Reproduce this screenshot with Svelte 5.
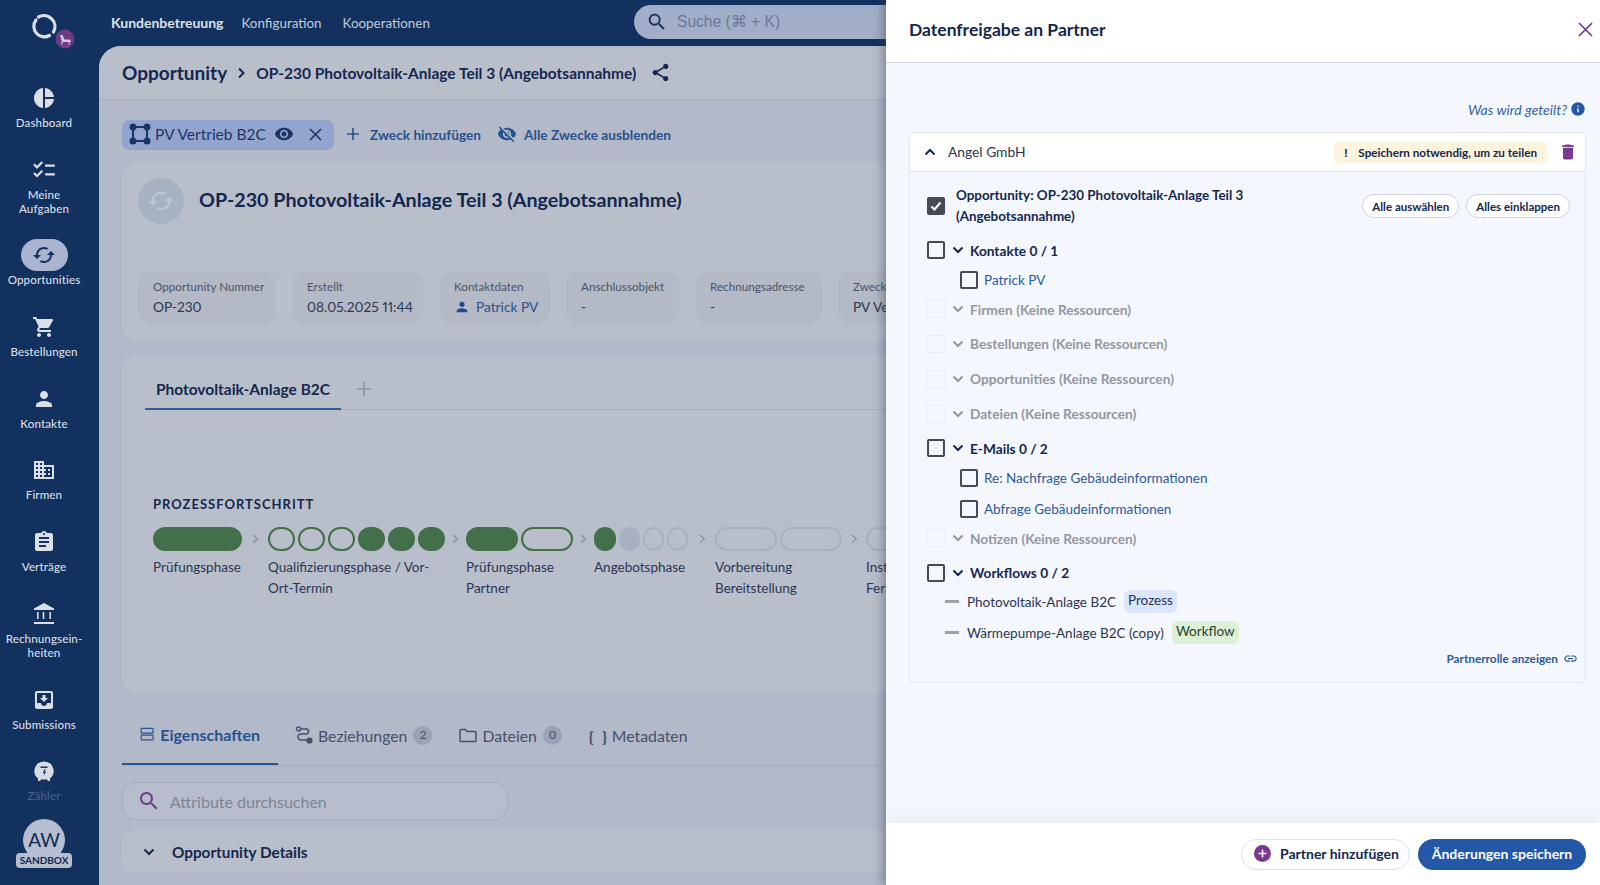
<script>
  const icons = {
    pie: 'M11 2v20c-5.07-.5-9-4.79-9-10s3.93-9.5 9-10zm2.03 0v8.99H22c-.47-4.74-4.24-8.52-8.97-8.99zm0 11.01V22c4.74-.47 8.5-4.25 8.97-8.99h-8.97z',
    tasks: 'M22 7h-9v2h9V7zm0 8h-9v2h9v-2zM5.54 11 2 7.46l1.41-1.41 2.12 2.12 4.24-4.24 1.41 1.41L5.54 11zm0 8L2 15.46l1.41-1.41 2.12 2.12 4.24-4.24 1.41 1.41L5.54 19z',
    cached: 'M19 8l-4 4h3c0 3.31-2.69 6-6 6-1.01 0-1.97-.25-2.8-.7l-1.46 1.46C8.97 19.54 10.43 20 12 20c4.42 0 8-3.58 8-8h3l-4-4zM6 12c0-3.31 2.69-6 6-6 1.01 0 1.97.25 2.8.7l1.46-1.46C15.03 4.46 13.57 4 12 4c-4.42 0-8 3.58-8 8H1l4 4 4-4H6z',
    cart: 'M7 18c-1.1 0-1.99.9-1.99 2S5.9 22 7 22s2-.9 2-2-.9-2-2-2zM1 2v2h2l3.6 7.59-1.35 2.45c-.16.28-.25.61-.25.96 0 1.1.9 2 2 2h12v-2H7.42c-.14 0-.25-.11-.25-.25l.03-.12.9-1.63h7.45c.75 0 1.41-.41 1.75-1.03l3.58-6.49c.08-.14.12-.31.12-.48 0-.55-.45-1-1-1H5.21l-.94-2H1zm16 16c-1.1 0-1.99.9-1.99 2s.89 2 1.99 2 2-.9 2-2-.9-2-2-2z',
    person: 'M12 12c2.21 0 4-1.79 4-4s-1.79-4-4-4-4 1.79-4 4 1.79 4 4 4zm0 2c-2.67 0-8 1.34-8 4v2h16v-2c0-2.66-5.33-4-8-4z',
    domain: 'M12 7V3H2v18h20V7H12zM6 19H4v-2h2v2zm0-4H4v-2h2v2zm0-4H4V9h2v2zm0-4H4V5h2v2zm4 12H8v-2h2v2zm0-4H8v-2h2v2zm0-4H8V9h2v2zm0-4H8V5h2v2zm10 12h-8v-2h2v-2h-2v-2h2v-2h-2V9h8v10zm-2-8h-2v2h2v-2zm0 4h-2v2h2v-2z',
    assignment: 'M19 3h-4.18C14.4 1.84 13.3 1 12 1c-1.3 0-2.4.84-2.82 2H5c-1.1 0-2 .9-2 2v14c0 1.1.9 2 2 2h14c1.1 0 2-.9 2-2V5c0-1.1-.9-2-2-2zm-7 0c.55 0 1 .45 1 1s-.45 1-1 1-1-.45-1-1 .45-1 1-1zm2 14H7v-2h7v2zm3-4H7v-2h10v2zm0-4H7V7h10v2z',
    bank: 'M5 10v7h1.6v-7H5zm5.7 0v7h1.6v-7h-1.6zM2 22h20v-2H2v2zm15.4-12v7H19v-7h-1.6zM12 1 2 6.5V8h20V6.5L12 1z',
    inbox: 'M19 3H5c-1.1 0-2 .9-2 2v14c0 1.1.9 2 2 2h14c1.1 0 2-.9 2-2V5c0-1.1-.9-2-2-2zm0 12h-4c0 1.66-1.35 3-3 3s-3-1.34-3-3H5V5h14v10zm-3-5h-2.5V7h-3v3H8l4 4 4-4z',
    search: 'M15.5 14h-.79l-.28-.27C15.41 12.59 16 11.11 16 9.5 16 5.91 13.09 3 9.5 3S3 5.91 3 9.5 5.91 16 9.5 16c1.61 0 3.09-.59 4.23-1.57l.27.28v.79l5 4.99L20.49 19l-4.99-5zm-6 0C7.01 14 5 11.99 5 9.5S7.01 5 9.5 5 14 7.01 14 9.5 11.99 14 9.5 14z',
    share: 'M18 16.08c-.76 0-1.44.3-1.96.77L8.91 12.7c.05-.23.09-.46.09-.7s-.04-.47-.09-.7l7.05-4.11c.54.5 1.25.81 2.04.81 1.66 0 3-1.34 3-3s-1.34-3-3-3-3 1.34-3 3c0 .24.04.47.09.7L8.04 9.81C7.5 9.31 6.79 9 6 9c-1.66 0-3 1.34-3 3s1.34 3 3 3c.79 0 1.5-.31 2.04-.81l7.12 4.16c-.05.21-.08.43-.08.65 0 1.61 1.31 2.92 2.92 2.92s2.92-1.31 2.92-2.92-1.31-2.92-2.92-2.92z',
    eye: 'M12 4.5C7 4.5 2.73 7.61 1 12c1.73 4.39 6 7.5 11 7.5s9.27-3.11 11-7.5c-1.73-4.39-6-7.5-11-7.5zM12 17c-2.76 0-5-2.24-5-5s2.24-5 5-5 5 2.24 5 5-2.24 5-5 5zm0-8c-1.66 0-3 1.34-3 3s1.34 3 3 3 3-1.34 3-3-1.34-3-3-3z',
    eyeOff: 'M12 7c2.76 0 5 2.24 5 5 0 .65-.13 1.26-.36 1.83l2.92 2.92c1.51-1.26 2.7-2.89 3.43-4.75-1.73-4.39-6-7.5-11-7.5-1.4 0-2.74.25-3.98.7l2.16 2.16C10.74 7.13 11.35 7 12 7zM2 4.27l2.28 2.28.46.46C3.08 8.3 1.78 10.02 1 12c1.73 4.39 6 7.5 11 7.5 1.55 0 3.03-.3 4.38-.84l.42.42L19.73 22 21 20.73 3.27 3 2 4.27zM7.53 9.8l1.55 1.55c-.05.21-.08.43-.08.65 0 1.66 1.34 3 3 3 .22 0 .44-.03.65-.08l1.55 1.55c-.67.33-1.41.53-2.2.53-2.76 0-5-2.24-5-5 0-.79.2-1.53.53-2.2zm4.31-.78l3.15 3.15.02-.16c0-1.66-1.34-3-3-3l-.17.01z',
    info: 'M12 2C6.48 2 2 6.48 2 12s4.48 10 10 10 10-4.48 10-10S17.52 2 12 2zm1 15h-2v-6h2v6zm0-8h-2V7h2v2z',
    trash: 'M6 19c0 1.1.9 2 2 2h8c1.1 0 2-.9 2-2V7H6v12zM19 4h-3.5l-1-1h-5l-1 1H5v2h14V4z',
    link: 'M3.9 12c0-1.71 1.39-3.1 3.1-3.1h4V7H7c-2.76 0-5 2.24-5 5s2.24 5 5 5h4v-1.9H7c-1.71 0-3.1-1.39-3.1-3.1zM8 13h8v-2H8v2zm9-6h-4v1.9h4c1.71 0 3.1 1.39 3.1 3.1s-1.39 3.1-3.1 3.1h-4V17h4c2.76 0 5-2.24 5-5s-2.24-5-5-5z'
  };

  const navItems = [
    { icon: 'pie', label: 'Dashboard' },
    { icon: 'tasks', label: 'Meine Aufgaben', wide: true },
    { icon: 'cached', label: 'Opportunities', active: true },
    { icon: 'cart', label: 'Bestellungen' },
    { icon: 'person', label: 'Kontakte' },
    { icon: 'domain', label: 'Firmen' },
    { icon: 'assignment', label: 'Verträge' },
    { icon: 'bank', label: 'Rechnungsein-heiten', wide: true },
    { icon: 'inbox', label: 'Submissions' }
  ];

  const infos = [
    { label: 'Opportunity Nummer', value: 'OP-230', width: 138 },
    { label: 'Erstellt', value: '08.05.2025 11:44', width: 131 },
    { label: 'Kontaktdaten', value: 'Patrick PV', width: 111, person: true },
    { label: 'Anschlussobjekt', value: '-', width: 113 },
    { label: 'Rechnungsadresse', value: '-', width: 127 },
    { label: 'Zweck', value: 'PV Vertrieb B2C', width: 140 }
  ];

  // f = filled, o = outlined green, g = grey fill, e = empty
  const phases = [
    { name: 'Prüfungsphase', width: 89, segs: [['f', 89]] },
    { name: 'Qualifizierungsphase / Vor-Ort-Termin', width: 176, gap: 26, segs: [['o', 27], ['o', 27], ['o', 27], ['f', 27], ['f', 27], ['f', 27]] },
    { name: 'Prüfungsphase Partner', width: 106, gap: 22, segs: [['f', 52], ['o', 52]] },
    { name: 'Angebotsphase', width: 94, gap: 22, segs: [['f', 22], ['g', 21], ['e', 21], ['e', 21]] },
    { name: 'Vorbereitung Bereitstellung', width: 127, gap: 27, segs: [['e', 62], ['e', 62]] },
    { name: 'Installation Fertigstellung', width: 127, gap: 24, segs: [['e', 62], ['e', 62]] }
  ];

  const tabs = [
    { label: 'Beziehungen', badge: 2, kind: 'rel' },
    { label: 'Dateien', badge: 0, kind: 'folder' },
    { label: 'Metadaten', kind: 'braces' }
  ];

  const groups = [
    { label: 'Kontakte 0 / 1', children: ['Patrick PV'] },
    { label: 'Firmen (Keine Ressourcen)', off: true },
    { label: 'Bestellungen (Keine Ressourcen)', off: true },
    { label: 'Opportunities (Keine Ressourcen)', off: true },
    { label: 'Dateien (Keine Ressourcen)', off: true },
    { label: 'E-Mails 0 / 2', children: ['Re: Nachfrage Gebäudeinformationen', 'Abfrage Gebäudeinformationen'] },
    { label: 'Notizen (Keine Ressourcen)', off: true },
    { label: 'Workflows 0 / 2' }
  ];
</script>

{#snippet icon(name, size)}
  <svg class="ico" width={size} height={size} viewBox="0 0 24 24" fill="currentColor"><path d={icons[name]} /></svg>
{/snippet}

{#snippet chevron(size, dir)}
  <svg class="ico" width={size} height={size} viewBox="0 0 16 16" fill="none" stroke="currentColor" stroke-width="2">
    {#if dir === 'up'}<path d="M3.5 10.5 8 6l4.5 4.5" />
    {:else if dir === 'right'}<path d="M6 3.5 10.5 8 6 12.5" />
    {:else}<path d="M3.5 5.5 8 10l4.5-4.5" />{/if}
  </svg>
{/snippet}

<div class="app">
  <aside class="sidebar">
    <svg class="logo" width="99" height="82" viewBox="0 0 99 82" fill="none">
      <path d="M38.500 17A11 11 0 0 1 53.500 32" stroke="#d9dee7" stroke-width="3.200" stroke-linecap="round" />
      <path d="M36 20A10.500 10.500 0 0 0 49.500 35.500" stroke="#d9dee7" stroke-width="3.200" stroke-linecap="round" />
      <circle cx="65" cy="39" r="9.500" fill="#6b3d83" />
      <path d="M60 35h2.500l2 4.500h5.500l1 2.500h-9z" fill="#d7c4de" />
      <path d="M62 42v2.500M69 42v2.500" stroke="#d7c4de" stroke-width="1.200" />
    </svg>
    <nav class="side-nav">
      {#each navItems as item}
        <div class="side-item" class:active={item.active}>
          <div class="side-icon">{@render icon(item.icon, item.icon === 'tasks' ? 26 : 24)}</div>
          <span class:narrow={item.wide}>{item.label}</span>
        </div>
      {/each}
      <div class="side-item faded">
        <div class="side-icon">
          <svg width="24" height="24" viewBox="0 0 24 24">
            <path d="M12 2.500a9.500 9.500 0 0 1 6 16.900V22h-2.500v-1.500h-7V22H6v-2.600A9.500 9.500 0 0 1 12 2.500z" fill="#d5dae4" />
            <path d="M8.500 7.500h7v1.500h-7zM12.800 10l-2 4h1.500l-1 3 3-4.200h-1.600l1-2.800z" fill="#12315f" />
          </svg>
        </div>
        <span>Zähler</span>
      </div>
    </nav>
    <div class="avatar">
      <div class="avatar-circle">AW</div>
      <div class="sandbox">SANDBOX</div>
    </div>
  </aside>

  <div class="main">
    <header class="topbar">
      <div class="top-nav">
        <b>Kundenbetreuung</b>
        <span>Konfiguration</span>
        <span>Kooperationen</span>
      </div>
      <div class="global-search">
        {@render icon('search', 22)}
        <span>Suche (⌘ + K)</span>
      </div>
    </header>

    <div class="panel">
      <div class="crumbs">
        <span class="crumb-root">Opportunity</span>
        {@render chevron(16, 'right')}
        <span class="crumb-title">OP-230 Photovoltaik-Anlage Teil 3 (Angebotsannahme)</span>
        {@render icon('share', 21)}
      </div>

      <div class="content">
        <div class="purpose-row">
          <div class="purpose">
            <svg width="24" height="24" viewBox="0 0 24 24" fill="none" stroke="#1c3566" stroke-width="2">
              <rect x="5" y="5" width="14" height="14" />
              <circle cx="5" cy="5" r="2.500" fill="#1c3566" />
              <circle cx="19" cy="5" r="2.500" fill="#1c3566" />
              <circle cx="5" cy="19" r="2.500" fill="#1c3566" />
              <circle cx="19" cy="19" r="2.500" fill="#1c3566" />
            </svg>
            <span>PV Vertrieb B2C</span>
            {@render icon('eye', 20)}
            <svg class="purpose-x" width="13" height="13" viewBox="0 0 13 13" stroke="#1c3566" stroke-width="1.600"><path d="M1 1l11 11M12 1 1 12" /></svg>
          </div>
          <div class="action">
            <svg width="14" height="14" viewBox="0 0 14 14" stroke="currentColor" stroke-width="1.600"><path d="M7 1v12M1 7h12" /></svg>
            <span>Zweck hinzufügen</span>
          </div>
          <div class="action second">
            {@render icon('eyeOff', 20)}
            <span>Alle Zwecke ausblenden</span>
          </div>
        </div>

        <section class="card head-card">
          <div class="title-row">
            <div class="round">{@render icon('cached', 28)}</div>
            <h1>OP-230 Photovoltaik-Anlage Teil 3 (Angebotsannahme)</h1>
          </div>
          <div class="infos">
            {#each infos as info}
              <div class="info" style="width: {info.width}px">
                <small>{info.label}</small>
                {#if info.person}
                  <p class="linked">{@render icon('person', 16)} {info.value}</p>
                {:else}
                  <p>{info.value}</p>
                {/if}
              </div>
            {/each}
          </div>
        </section>

        <section class="card process-card">
          <div class="plan-tabs">
            <div class="plan-tab">Photovoltaik-Anlage B2C</div>
            <svg class="plan-add" width="14" height="14" viewBox="0 0 14 14" stroke="#8b93a4" stroke-width="1.600"><path d="M7 0v14M0 7h14" /></svg>
          </div>
          <h3>PROZESSFORTSCHRITT</h3>
          <div class="phases">
            {#each phases as phase, i}
              {#if i > 0}
                <div class="phase-arrow" style="width: {phase.gap}px">{@render chevron(14, 'right')}</div>
              {/if}
              <div class="phase" style="width: {phase.width}px">
                <div class="segs">
                  {#each phase.segs as seg}
                    <div class="seg {seg[0]}" style="width: {seg[1]}px"></div>
                  {/each}
                </div>
                <div class="phase-name">{phase.name}</div>
              </div>
            {/each}
          </div>
        </section>

        <div class="detail-tabs">
          <div class="detail-tab current">
            <svg width="18" height="18" viewBox="0 0 18 18" fill="none" stroke="currentColor" stroke-width="1.500"><rect x="1.500" y="2" width="15" height="6" rx="1" /><rect x="1.500" y="10.500" width="15" height="6" rx="1" /></svg>
            Eigenschaften
          </div>
          {#each tabs as tab}
            <div class="detail-tab">
              {#if tab.kind === 'rel'}
                <svg width="18" height="18" viewBox="0 0 18 18" fill="none" stroke="currentColor" stroke-width="1.400"><circle cx="3.500" cy="3" r="2" /><path d="M5.500 3H11a2.500 2.500 0 0 1 0 5H6a2.500 2.500 0 0 0 0 6h6" /><circle cx="14.500" cy="14.500" r="2.400" fill="currentColor" /></svg>
              {:else if tab.kind === 'folder'}
                <svg width="18" height="18" viewBox="0 0 18 18" fill="none" stroke="currentColor" stroke-width="1.500"><path d="M1 4.500a1 1 0 0 1 1-1h4.500L8 5.500h8a1 1 0 0 1 1 1v8a1 1 0 0 1-1 1H2a1 1 0 0 1-1-1z" /></svg>
              {:else}
                <span class="braces"><b>{'{'}</b><b>{'}'}</b></span>
              {/if}
              {tab.label}
              {#if tab.badge !== undefined}<i>{tab.badge}</i>{/if}
            </div>
          {/each}
        </div>

        <div class="attr-search">
          {@render icon('search', 24)}
          <span>Attribute durchsuchen</span>
        </div>

        <div class="card details">
          {@render chevron(16, 'down')}
          <span>Opportunity Details</span>
        </div>
      </div>
    </div>
  </div>

  <aside class="drawer">
    <div class="drawer-head">
      <h2>Datenfreigabe an Partner</h2>
      <svg width="15" height="15" viewBox="0 0 15 15" stroke="#6f3a88" stroke-width="1.600"><path d="M1 1l13 13M14 1 1 14" /></svg>
    </div>
    <div class="drawer-body">
      <div class="hint"><em>Was wird geteilt?</em>{@render icon('info', 16)}</div>
      <div class="partner">
        <div class="partner-head">
          {@render chevron(16, 'up')}
          <span class="partner-name">Angel GmbH</span>
          <div class="warn"><b>!</b>Speichern notwendig, um zu teilen</div>
          <span class="trash">{@render icon('trash', 20)}</span>
        </div>
        <div class="partner-body">
          <div class="root-row">
            <div class="box checked">
              <svg width="14" height="14" viewBox="0 0 14 14" fill="none" stroke="#fff" stroke-width="2"><path d="M2.500 7.500 5.500 10.500 11.500 3.500" /></svg>
            </div>
            <div class="root-title">Opportunity: OP-230 Photovoltaik-Anlage Teil 3 (Angebotsannahme)</div>
            <div class="root-btns">
              <button>Alle auswählen</button>
              <button>Alles einklappen</button>
            </div>
          </div>

          {#each groups as group}
            <div class="group" class:off={group.off}>
              <div class="box"></div>
              {@render chevron(16, 'down')}
              <span>{group.label}</span>
            </div>
            {#if group.children}
              <div class="children">
                {#each group.children as child}
                  <div class="child"><div class="box"></div><a href="#top">{child}</a></div>
                {/each}
              </div>
            {/if}
          {/each}

          <div class="flows">
            <div class="flow"><b></b>Photovoltaik-Anlage B2C<span class="tag blue">Prozess</span></div>
            <div class="flow"><b></b>Wärmepumpe-Anlage B2C (copy)<span class="tag green">Workflow</span></div>
          </div>

          <div class="role-link">Partnerrolle anzeigen {@render icon('link', 15)}</div>
        </div>
      </div>
    </div>
    <div class="drawer-foot">
      <button class="add">
        <svg width="17" height="17" viewBox="0 0 17 17"><circle cx="8.500" cy="8.500" r="8.500" fill="#7b3a92" /><path d="M8.500 4.500v8M4.500 8.500h8" stroke="#fff" stroke-width="1.500" /></svg>
        Partner hinzufügen
      </button>
      <button class="save">Änderungen speichern</button>
    </div>
  </aside>
</div>

<style>
  :global(body) {
    margin: 0;
    font-family: Lato, "Open Sans", sans-serif;
    color: #14274f;
  }
  .app {
    position: relative;
    display: flex;
    width: 1600px;
    height: 885px;
    overflow: hidden;
    background: #12315f;
  }
  .ico {
    flex: none;
    display: block;
  }

  .sidebar {
    flex: none;
    display: flex;
    flex-direction: column;
    align-items: center;
    width: 99px;
    height: 885px;
    padding-right: 11px;
    box-sizing: border-box;
    color: #d9dee7;
  }
  .logo {
    flex: none;
    align-self: flex-start;
  }
  .side-nav {
    display: flex;
    flex-direction: column;
    gap: 23.700px;
    width: 100%;
  }
  .side-item {
    display: flex;
    flex-direction: column;
    align-items: center;
    font-size: 11.600px;
    font-weight: 500;
    line-height: 14px;
    text-align: center;
    letter-spacing: .1px;
  }
  .side-item span {
    margin-top: 2px;
  }
  .side-item .narrow {
    width: 78px;
  }
  .side-icon {
    display: flex;
    align-items: center;
    justify-content: center;
    width: 47px;
    height: 32px;
    border-radius: 16px;
  }
  .side-item.active .side-icon {
    background: #a9b4cf;
    color: #12315f;
  }
  .side-item.faded span {
    color: #48638e;
  }
  .avatar {
    position: relative;
    margin-top: 16px;
    width: 56px;
    height: 50px;
  }
  .avatar-circle {
    width: 42px;
    height: 42px;
    margin: 0 auto;
    border-radius: 50%;
    background: #b5bdd0;
    color: #14274f;
    font-size: 19px;
    line-height: 42px;
    text-align: center;
  }
  .sandbox {
    position: absolute;
    left: 0;
    top: 34px;
    width: 56px;
    height: 15px;
    border-radius: 4px;
    background: #b5bdd0;
    color: #14274f;
    font-size: 10px;
    font-weight: 700;
    line-height: 15px;
    text-align: center;
  }

  .main {
    flex: none;
    width: 1501px;
    display: flex;
    flex-direction: column;
  }
  .topbar {
    flex: none;
    display: flex;
    align-items: flex-start;
    height: 46px;
    padding-left: 12px;
  }
  .top-nav {
    display: flex;
    gap: 21px;
    width: 523px;
    font-size: 13.400px;
    line-height: 46px;
    color: #c4cbd8;
  }
  .top-nav b {
    font-size: 14px;
    color: #dde1e8;
    margin-right: -3px;
  }
  .global-search {
    display: flex;
    align-items: center;
    gap: 9px;
    width: 640px;
    height: 34px;
    margin-top: 5px;
    padding-left: 12px;
    border-radius: 17px;
    background: #a2aec9;
    color: #1f3157;
    box-sizing: border-box;
  }
  .global-search span {
    font-family: "Liberation Sans", sans-serif;
    font-size: 15.600px;
    color: #6a7897;
  }

  .panel {
    flex: 1;
    min-height: 0;
    border-top-left-radius: 22px;
    background: #b2b9c9;
    overflow: hidden;
  }
  .crumbs {
    display: flex;
    align-items: center;
    height: 53px;
    padding-left: 23px;
    background: #b9bfca;
    border-bottom: 1px solid #a6adba;
    color: #14274f;
  }
  .crumb-root {
    font-size: 19px;
    font-weight: 700;
  }
  .crumbs .ico:nth-child(2) {
    margin: 0 7px 0 6px;
  }
  .crumb-title {
    font-size: 15.500px;
    font-weight: 700;
    margin-right: 14px;
  }

  .content {
    padding: 20px 23px 0;
    width: 1455px;
  }
  .purpose-row {
    display: flex;
    align-items: center;
    height: 30px;
    padding-bottom: 2px;
    box-sizing: border-box;
    color: #28528f;
    font-size: 13.700px;
    font-weight: 700;
  }
  .purpose {
    display: flex;
    align-items: center;
    flex: none;
    width: 212px;
    height: 30px;
    margin-bottom: -2px;
    padding: 0 0 2px 6px;
    box-sizing: border-box;
    border-radius: 7px;
    background: #93a5cf;
    color: #1c3566;
  }
  .purpose span {
    margin: 0 8px 0 3px;
    font-size: 15.500px;
    font-weight: 400;
  }
  .purpose-x {
    margin-left: 15px;
  }
  .action {
    display: flex;
    align-items: center;
    gap: 10px;
    margin-left: 12px;
  }
  .action.second {
    gap: 7px;
    margin-left: 16px;
  }

  .card {
    background: #b9bfca;
    border-radius: 14px;
  }
  .head-card {
    height: 178px;
    margin-top: 12px;
    padding: 16px;
    box-sizing: border-box;
  }
  .title-row {
    display: flex;
    align-items: center;
    gap: 15px;
  }
  .round {
    display: flex;
    align-items: center;
    justify-content: center;
    width: 46px;
    height: 46px;
    border-radius: 50%;
    background: #a6b2c2;
    color: #bcc5d2;
  }
  h1 {
    margin: 0;
    padding-bottom: 3px;
    font-size: 19.700px;
    font-weight: 700;
  }
  .infos {
    display: flex;
    gap: 16px;
    margin-top: 47px;
  }
  .info {
    flex: none;
    height: 52px;
    padding: 8px 15px;
    box-sizing: border-box;
    border-radius: 14px;
    background: #b3b9c5;
    white-space: nowrap;
    overflow: hidden;
  }
  .info small {
    display: block;
    font-size: 11.700px;
    line-height: 15px;
    color: #4a5368;
  }
  .info p {
    margin: 5px 0 0;
    font-size: 13.700px;
    line-height: 16px;
    color: #2c3750;
    font-variant-numeric: proportional-nums;
  }
  .info p.linked {
    display: flex;
    align-items: center;
    gap: 6px;
    color: #28528f;
  }
  .info p.linked .ico {
    color: #1f4a8d;
  }

  .process-card {
    height: 337px;
    margin-top: 15px;
    padding: 0 23px;
    box-sizing: border-box;
  }
  .plan-tabs {
    display: flex;
    align-items: center;
    height: 52px;
    padding-top: 2px;
    border-bottom: 1px solid #a6adba;
  }
  .plan-tab {
    align-self: stretch;
    width: 196px;
    padding-top: 23px;
    border-bottom: 2px solid #35588f;
    margin-bottom: -1px;
    font-size: 15.500px;
    font-weight: 700;
    text-align: center;
    box-sizing: border-box;
  }
  .plan-add {
    margin-left: 16px;
    margin-top: 12px;
  }
  h3 {
    margin: 86px 0 0 8px;
    font-size: 13px;
    font-weight: 700;
    line-height: 16px;
    letter-spacing: 1px;
  }
  .phases {
    display: flex;
    margin: 15px 0 0 8px;
  }
  .phase {
    flex: none;
  }
  .phase-arrow {
    flex: none;
    height: 24px;
    display: flex;
    align-items: center;
    justify-content: center;
    color: #8e96a7;
  }
  .segs {
    display: flex;
    gap: 3px;
    height: 24px;
  }
  .seg {
    flex: none;
    box-sizing: border-box;
    border-radius: 12px;
  }
  .seg.f {
    background: #436f4b;
  }
  .seg.o {
    border: 2px solid #436f4b;
  }
  .seg.g {
    background: #a9b0c1;
  }
  .seg.e {
    border: 2px solid #a9b0c1;
  }
  .phase-name {
    margin-top: 6px;
    font-size: 13.500px;
    line-height: 21px;
    color: #2a3555;
  }

  .detail-tabs {
    display: flex;
    align-items: stretch;
    height: 74px;
    box-sizing: border-box;
    border-bottom: 1px solid #a6adba;
  }
  .detail-tab {
    display: flex;
    align-items: center;
    gap: 5px;
    margin-top: 23px;
    padding: 0 13.500px 10px;
    font-size: 15.800px;
    color: #46506a;
    height: 50px;
    box-sizing: border-box;
  }
  .detail-tab.current {
    gap: 6px;
    width: 156px;
    margin-right: 3.500px;
    padding: 0 18px 10px;
    color: #28528f;
    font-weight: 700;
    font-size: 16px;
    border-bottom: 2px solid #28528f;
    margin-bottom: -1px;
  }
  .detail-tab i {
    width: 19px;
    height: 19px;
    margin-left: 1px;
    border-radius: 50%;
    background: #9aa2b3;
    font-style: normal;
    font-size: 12px;
    line-height: 18px;
    text-align: center;
  }
  .braces {
    display: flex;
    justify-content: space-between;
    width: 18px;
    font-size: 16px;
  }
  .attr-search {
    display: flex;
    align-items: center;
    gap: 9px;
    width: 386px;
    height: 38px;
    margin-top: 16px;
    padding-left: 14px;
    box-sizing: border-box;
    border: 1px solid #a4adc0;
    border-radius: 14px;
    background: #b7bdcc;
    color: #6c3f85;
  }
  .attr-search span {
    font-size: 16px;
    color: #7c8598;
  }
  .details {
    display: flex;
    align-items: center;
    gap: 15px;
    height: 43px;
    margin-top: 10px;
    padding-left: 19px;
    font-size: 15.300px;
    font-weight: 700;
  }

  .drawer {
    position: absolute;
    left: 886px;
    top: 0;
    display: flex;
    flex-direction: column;
    width: 714px;
    height: 885px;
    background: #f5f7fe;
    box-shadow: -3px 0 10px rgba(50, 58, 85, .45);
    color: #14274f;
  }
  .drawer-head {
    flex: none;
    display: flex;
    align-items: center;
    justify-content: space-between;
    height: 58px;
    padding: 0 7px 4px 23px;
    background: #fff;
    border-bottom: 1px solid #cfd3e3;
  }
  h2 {
    margin: 0;
    font-size: 17.500px;
    font-weight: 700;
  }
  .drawer-body {
    flex: 1;
    padding: 36px 14px 0 23px;
  }
  .hint {
    display: flex;
    align-items: center;
    justify-content: flex-end;
    gap: 3px;
    height: 20px;
    color: #2357a8;
  }
  .hint em {
    font-size: 14px;
    color: #2f5fa5;
  }
  .partner {
    margin-top: 13px;
    border: 1px solid #e3e6ef;
    border-radius: 4px;
  }
  .partner-head {
    display: flex;
    align-items: center;
    height: 38px;
    padding: 0 7px 0 12px;
    background: #fff;
    border-bottom: 1px solid #e3e6ef;
  }
  .partner-name {
    margin-left: 10px;
    padding-bottom: 1px;
    font-size: 13.800px;
    color: #2b3550;
  }
  .warn {
    display: flex;
    align-items: center;
    height: 21px;
    margin-left: auto;
    padding: 0 10px;
    border-radius: 4px;
    background: #fdf4dd;
    font-size: 11.700px;
    font-weight: 700;
  }
  .warn b {
    width: 14px;
  }
  .trash {
    margin-left: 11px;
    color: #7b3a92;
  }
  .partner-body {
    padding: 13px 7px 14px 17px;
  }
  .box {
    flex: none;
    width: 18px;
    height: 18px;
    box-sizing: border-box;
    border: 2px solid #444a58;
    border-radius: 2px;
  }
  .box.checked {
    display: flex;
    align-items: center;
    justify-content: center;
    background: #444a58;
  }
  .root-row {
    display: flex;
    align-items: center;
    margin-bottom: 6px;
  }
  .root-title {
    width: 310px;
    margin-left: 11px;
    font-size: 13.400px;
    font-weight: 700;
    line-height: 21px;
  }
  .root-btns {
    display: flex;
    gap: 7px;
    margin-left: auto;
    margin-right: 8px;
  }
  .root-btns button {
    height: 24px;
    padding: 0 9px;
    background: #fff;
    border: 1px solid #cfd4e0;
    border-radius: 12px;
    font: 700 11.500px Lato, sans-serif;
    color: #14274f;
  }
  .group {
    display: flex;
    align-items: center;
    height: 34.800px;
    font-size: 13.700px;
    font-weight: 700;
  }
  .group .ico {
    margin: 0 4px 0 5px;
  }
  .group.off {
    color: #92989f;
  }
  .group.off .box {
    border-color: #eceef5;
    border-width: 1px;
  }
  .children {
    margin: -3px 0 -4px;
  }
  .child {
    display: flex;
    align-items: center;
    gap: 6px;
    height: 31px;
    padding-left: 33px;
    font-size: 13.500px;
  }
  .child a {
    color: #2a5a9f;
    text-decoration: none;
  }
  .flows {
    margin-top: -4px;
  }
  .flow {
    display: flex;
    align-items: center;
    height: 31px;
    padding-left: 18px;
    font-size: 13.500px;
    color: #2b3550;
  }
  .flow b {
    width: 14px;
    height: 3px;
    margin-right: 8px;
    background: #9aa3b0;
  }
  .tag {
    height: 23px;
    margin-left: 8px;
    padding: 0 4px;
    border-radius: 6px;
    line-height: 21px;
  }
  .tag.blue {
    background: #dbe5fb;
    color: #1e3460;
  }
  .tag.green {
    background: #dcf0d8;
    color: #24452a;
  }
  .role-link {
    display: flex;
    align-items: center;
    justify-content: flex-end;
    gap: 5px;
    height: 20px;
    font-size: 11.800px;
    font-weight: 700;
    color: #2a5a9f;
  }
  .drawer-foot {
    flex: none;
    display: flex;
    align-items: center;
    justify-content: flex-end;
    gap: 8px;
    height: 62px;
    padding-right: 14px;
    background: #fff;
    box-shadow: 0 -6px 14px rgba(60, 70, 110, .05);
  }
  .drawer-foot button {
    height: 31px;
    padding-bottom: 2px;
    border-radius: 16px;
    font: 700 14px Lato, sans-serif;
  }
  .add {
    display: flex;
    align-items: center;
    gap: 9px;
    width: 169px;
    padding: 0 0 0 12px;
    background: #fff;
    border: 1px solid #dfe2ea;
    color: #14274f;
  }
  .save {
    width: 168px;
    padding: 0;
    background: #2357a8;
    border: 0;
    color: #fff;
  }
</style>
